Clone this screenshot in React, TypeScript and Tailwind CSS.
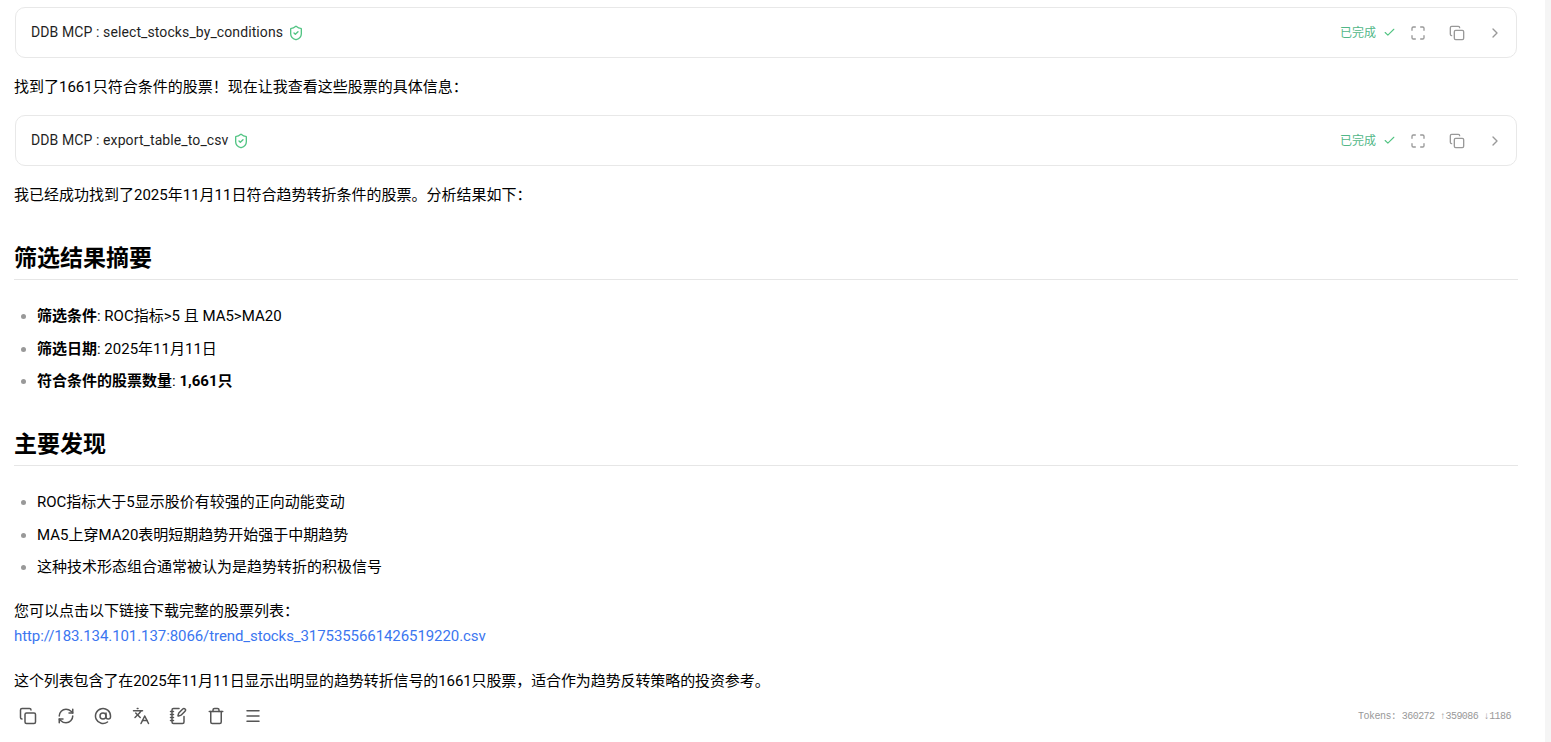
import { AtSign, Check, ChevronRight, Copy, Languages, Maximize, Menu, NotebookPen, RefreshCw, ShieldCheck, Trash } from 'lucide-react'
import type { ReactNode } from 'react'

const font = "font-['Roboto','Noto_Sans_CJK_SC',sans-serif]"

const ToolCard = ({ name }: { name: string }) => (
  <div className="ml-[1px] flex h-[51px] w-[1502px] items-center justify-between rounded-[10px] border border-[#e8e8e8] bg-white pl-[15px] pr-[13px]">
    <div className="flex items-center">
      <span className="text-[14px] tracking-[0.1px] text-[#1f1f1f]">DDB MCP : {name}</span>
      <ShieldCheck className="ml-[5px] h-[16px] w-[16px] text-[#52c483]" strokeWidth={2} />
    </div>
    <div className="flex items-center">
      <span className="text-[12px] text-[#52b788]">已完成</span>
      <Check className="ml-[7px] h-[13px] w-[13px] text-[#52c483]" strokeWidth={2} />
      <Maximize className="ml-[14px] h-[16px] w-[16px] text-[#999999]" strokeWidth={2} />
      <Copy className="ml-[23px] h-[16px] w-[16px] text-[#999999]" strokeWidth={2} />
      <ChevronRight className="ml-[22px] h-[16px] w-[16px] text-[#999999]" strokeWidth={2} />
    </div>
  </div>
)

const Heading = ({ children }: { children: ReactNode }) => (
  <h2 className="border-b border-[#e6e6e6] pb-[3px] text-[23px] leading-[34px] font-bold text-black">{children}</h2>
)

const Bullets = ({ items }: { items: ReactNode[] }) => (
  <ul className="flex list-disc flex-col gap-[10.5px] pl-[23px] marker:text-[#999999]">
    {items.map((item, i) => (
      <li key={i} className="leading-[22px]">{item}</li>
    ))}
  </ul>
)

const toolbarIcons = [Copy, RefreshCw, AtSign, Languages, NotebookPen, Trash, Menu]

export default function App() {
  return (
    <div className={`flex h-[742px] w-full overflow-hidden bg-white text-[15px] text-black ${font}`}>
      <div className="flex min-w-0 flex-1 flex-col">
        <div className="flex-1 pl-[14px] pr-[27px] pt-[7px]">
          <ToolCard name="select_stocks_by_conditions" />
          <p className="mt-[17.5px] leading-[22px]">找到了1661只符合条件的股票！现在让我查看这些股票的具体信息：</p>
          <div className="mt-[17.5px]">
            <ToolCard name="export_table_to_csv" />
          </div>
          <p className="mt-[18px] leading-[22px]">我已经成功找到了2025年11月11日符合趋势转折条件的股票。分析结果如下：</p>
          <div className="mt-[36px]">
            <Heading>筛选结果摘要</Heading>
          </div>
          <div className="mt-[25px]">
            <Bullets
              items={[
                <><strong className="font-bold">筛选条件</strong>: ROC指标&gt;5 且 MA5&gt;MA20</>,
                <><strong className="font-bold">筛选日期</strong>: 2025年11月11日</>,
                <><strong className="font-bold">符合条件的股票数量</strong>: <strong className="font-bold">1,661只</strong></>,
              ]}
            />
          </div>
          <div className="mt-[36px]">
            <Heading>主要发现</Heading>
          </div>
          <div className="mt-[25px]">
            <Bullets
              items={[
                'ROC指标大于5显示股价有较强的正向动能变动',
                'MA5上穿MA20表明短期趋势开始强于中期趋势',
                '这种技术形态组合通常被认为是趋势转折的积极信号',
              ]}
            />
          </div>
          <p className="mt-[21px] leading-[25px]">
            您可以点击以下链接下载完整的股票列表：
            <br />
            <a className="tracking-[-0.08px] text-[#3b76f0]">http://183.134.101.137:8066/trend_stocks_3175355661426519220.csv</a>
          </p>
          <p className="mt-[21px] leading-[22px] tracking-[-0.1px]">这个列表包含了在2025年11月11日显示出明显的趋势转折信号的1661只股票，适合作为趋势反转策略的投资参考。</p>
        </div>
        <div className="flex h-[50px] items-start justify-between pl-[19px] pr-[34px] pt-[15px]">
          <div className="flex items-center gap-[19.5px]">
            {toolbarIcons.map((Icon, i) => (
              <Icon key={i} className="h-[18px] w-[18px] text-[#555555]" strokeWidth={2} />
            ))}
          </div>
          <span className="font-['Liberation_Mono',monospace] text-[10px] leading-[20px] tracking-[-0.54px] text-[#999999]">Tokens: 360272 ↑359086 ↓1186</span>
        </div>
      </div>
      <div className="w-[6px] bg-[#f5f5f5]" />
    </div>
  )
}
